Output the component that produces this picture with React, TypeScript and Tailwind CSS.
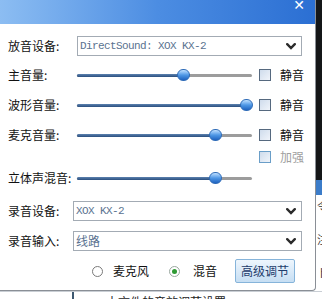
import React from "react";

const cjk = { fontFamily: '"Noto Sans CJK SC", "Noto Sans", sans-serif' };
const mono = { fontFamily: '"Liberation Mono", "Noto Sans CJK SC", monospace' };

// small dropdown box, win-xp style
const Select = ({ value, isMono }: { value: string; isMono?: boolean }) => (
  <div className="flex h-[20px] flex-1 items-center justify-between border border-[#a3abb4] bg-white pl-[2px] pr-[5px]">
    <span
      className={isMono ? "text-[11px] tracking-[-0.6px] text-[#5a7290]" : "text-[12px] text-[#5a7290]"}
      style={isMono ? mono : cjk}
    >
      {value}
    </span>
    <svg width="10" height="7" viewBox="0 0 10 7">
      <path d="M1.2 1.2 L5 5 L8.8 1.2" fill="none" stroke="#2b2b2b" strokeWidth="2.4" strokeLinecap="round" />
    </svg>
  </div>
);

const Slider = ({ value }: { value: number }) => (
  <div className="relative h-[20px] w-[175px] shrink-0">
    <div className="absolute left-0 top-[9px] h-[3px] w-full rounded-full bg-[#9c9c9c]" />
    <div
      className="absolute left-0 top-[9px] h-[3px] rounded-full bg-gradient-to-b from-[#5c82b0] to-[#2b4f7e]"
      style={{ width: `${value * 100}%` }}
    />
    <div
      className="absolute top-[4px] h-[12px] w-[13px] rounded-full border border-[#2f6cb8] bg-gradient-to-b from-[#bfe0ff] via-[#4f98e6] to-[#1f63c0]"
      style={{ left: `calc(${value * 100}% - 6.5px)` }}
    />
  </div>
);

const CheckBox = ({ disabled }: { disabled?: boolean }) => (
  <div
    className={
      disabled
        ? "h-[12px] w-[12px] shrink-0 border border-[#6a9ec8] bg-gradient-to-br from-[#cfdcec] to-[#f0f4fa]"
        : "h-[12px] w-[12px] shrink-0 border border-[#56697f] bg-gradient-to-br from-[#cfdcec] to-[#f0f4fa]"
    }
  />
);

const SliderRow = ({ label, value, mute }: { label: string; value: number; mute?: boolean }) => (
  <div className="flex h-[20px] items-center whitespace-nowrap">
    <span className="w-[69px] shrink-0 text-[12px] text-[#111]" style={cjk}>
      {label}
    </span>
    <Slider value={value} />
    {mute && (
      <div className="ml-[7px] flex shrink-0 items-center">
        <CheckBox />
        <span className="ml-[9px] text-[12px] text-[#111]" style={cjk}>
          静音
        </span>
      </div>
    )}
  </div>
);

const Radio = ({ checked }: { checked?: boolean }) => (
  <div
    className={
      checked
        ? "flex h-[11px] w-[11px] items-center justify-center rounded-full border border-[#9aa8a0] bg-white"
        : "h-[11px] w-[11px] rounded-full border border-[#7a7a7a] bg-white"
    }
  >
    {checked && <div className="h-[5px] w-[5px] rounded-full bg-[#2f9a34]" />}
  </div>
);

export default function App() {
  return (
    <div className="flex h-[299px] w-[322px] flex-col overflow-hidden bg-white">
      <div className="flex h-[291px]">
        {/* dialog */}
        <div className="flex w-[316px] shrink-0 flex-col rounded-br-[4px] border-b border-r border-[#8a8f96] bg-white">
          <div className="relative h-[24px] bg-gradient-to-r from-[#8cbdf2] via-[#4c8de2] to-[#2b6fd3]">
            <span className="absolute right-[10px] top-[-3px] text-[14px] font-bold leading-[16px] text-white" style={{ fontFamily: '"DejaVu Sans", sans-serif' }}>
              ✕
            </span>
          </div>

          <div className="flex flex-col pl-[8px] pr-[13px] pt-[12px]">
            <div className="flex h-[20px] items-center">
              <span className="w-[69px] shrink-0 text-[12px] text-[#111]" style={cjk}>
                放音设备:
              </span>
              <Select value="DirectSound: XOX KX-2" isMono />
            </div>

            <div className="mt-[9px]">
              <SliderRow label="主音量:" value={0.606} mute />
            </div>
            <div className="mt-[10px]">
              <SliderRow label="波形音量:" value={0.966} mute />
            </div>
            <div className="mt-[10px]">
              <SliderRow label="麦克音量:" value={0.789} mute />
            </div>
            <div className="mt-[2px] flex h-[20px] items-center whitespace-nowrap pl-[251px]">
              <CheckBox disabled />
              <span className="ml-[9px] text-[12px] text-[#a0a0a0]" style={cjk}>
                加强
              </span>
            </div>
            <div className="mt-[1px]">
              <SliderRow label="立体声混音:" value={0.789} />
            </div>

            <div className="mt-[13px] flex h-[20px] items-center">
              <span className="w-[65px] shrink-0 text-[12px] text-[#111]" style={cjk}>
                录音设备:
              </span>
              <Select value="XOX KX-2" isMono />
            </div>
            <div className="mt-[10px] flex h-[20px] items-center">
              <span className="w-[65px] shrink-0 text-[12px] text-[#111]" style={cjk}>
                录音输入:
              </span>
              <Select value="线路" />
            </div>

            <div className="mt-[8px] flex h-[24px] items-center whitespace-nowrap">
              <div className="ml-[84px] flex items-center">
                <Radio />
                <span className="ml-[10px] text-[12px] text-[#111]" style={cjk}>
                  麦克风
                </span>
              </div>
              <div className="ml-[20px] flex items-center">
                <Radio checked />
                <span className="ml-[13px] text-[12px] text-[#111]" style={cjk}>
                  混音
                </span>
              </div>
              <button
                className="ml-auto mr-[7px] flex h-[24px] w-[60px] items-center justify-center rounded-[2px] border border-[#86b4da] bg-gradient-to-b from-[#eef6fd] to-[#c6def3] text-[12px] text-[#1f3d6c]"
                style={cjk}
              >
                高级调节
              </button>
            </div>
          </div>
        </div>

        {/* window behind, right edge */}
        <div className="flex w-[6px] flex-col">
          <div className="h-[180px] bg-[#141618]" />
          <div className="h-[15px] bg-[#3b7cc9]" />
          <div className="flex flex-1 flex-col gap-[22px] overflow-hidden bg-white pl-[1px] pt-[6px] text-[11px] leading-none text-[#333]" style={cjk}>
            <span>令</span>
            <span>注</span>
            <span>卜</span>
          </div>
        </div>
      </div>

      {/* window behind, bottom edge */}
      <div className="flex h-[8px] border-t border-[#c9ced4] bg-white">
        <div className="w-[72px]" />
        <div className="w-[2px] bg-[#3d5870]" />
        <div className="overflow-hidden whitespace-nowrap pl-[32px] pt-[4px] text-[12px] leading-none text-[#222]" style={cjk}>
          本文件的音效调节设置
        </div>
      </div>
    </div>
  );
}
